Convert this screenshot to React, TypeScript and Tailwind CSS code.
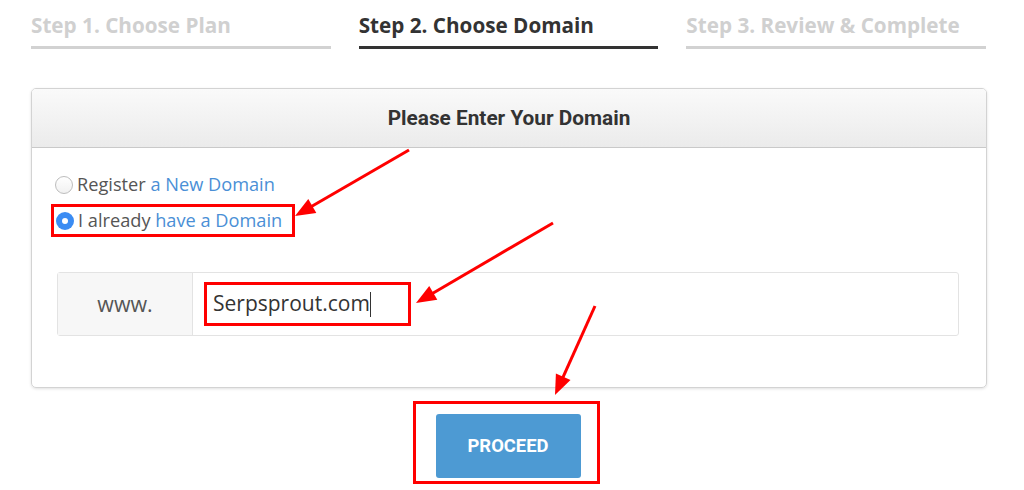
import React from "react";

type Arrow = { x1: number; y1: number; x2: number; y2: number };

const arrows: Arrow[] = [
  { x1: 409, y1: 150, x2: 295, y2: 216 },
  { x1: 553, y1: 223, x2: 416, y2: 303 },
  { x1: 595, y1: 306, x2: 555, y2: 395 },
];

function ArrowShape({ a }: { a: Arrow }) {
  const dx = a.x2 - a.x1;
  const dy = a.y2 - a.y1;
  const len = Math.hypot(dx, dy);
  const ux = dx / len;
  const uy = dy / len;
  const headLen = 20;
  const headW = 8;
  const bx = a.x2 - ux * headLen;
  const by = a.y2 - uy * headLen;
  const px = -uy;
  const py = ux;
  const pts = `${a.x2},${a.y2} ${bx + px * headW},${by + py * headW} ${bx - px * headW},${by - py * headW}`;
  return (
    <g>
      <line x1={a.x1} y1={a.y1} x2={bx + ux * 2} y2={by + uy * 2} stroke="#ff0000" strokeWidth={3} />
      <polygon points={pts} fill="#ff0000" />
    </g>
  );
}

export default function App() {
  return (
    <div
      className="relative w-[1024px] h-[490px] bg-white overflow-hidden"
      style={{ fontFamily: '"Open Sans", "Liberation Sans", sans-serif' }}
    >
      {/* Steps */}
      <div className="ml-[31px] w-[955px] grid grid-cols-3 gap-[28px] pt-[11px]">
        <div className="border-b-[3px] border-[#d2d2d2] pb-[7px]">
          <span className="text-[20.7px] leading-[28px] font-bold text-[#d0d0d0]">Step 1. Choose Plan</span>
        </div>
        <div className="border-b-[3px] border-[#333333] pb-[7px]">
          <span className="text-[20.7px] leading-[28px] font-bold text-[#333333]">Step 2. Choose Domain</span>
        </div>
        <div className="border-b-[3px] border-[#d2d2d2] pb-[7px]">
          <span className="text-[20.7px] leading-[28px] font-bold text-[#d0d0d0]">Step 3. Review &amp; Complete</span>
        </div>
      </div>

      {/* Card */}
      <div className="ml-[31px] mt-[39px] w-[956px] h-[300px] border border-[#d3d3d3] rounded-[5px] shadow-[0_1px_3px_rgba(0,0,0,0.12)] overflow-hidden">
        <div
          className="h-[59px] border-b border-[#c9c9c9] bg-gradient-to-b from-[#fafafa] to-[#ebebeb] flex items-center justify-center pt-[2px]"
          style={{ fontFamily: 'Roboto, "Liberation Sans", sans-serif' }}
        >
          <span className="text-[20.8px] font-bold text-[#333333]">Please Enter Your Domain</span>
        </div>
        <div className="px-[25px] pt-[26px]">
          <div className="flex items-center h-[22px] ml-[-2px]">
            <span className="w-[18px] h-[18px] rounded-full border border-[#bdbdbd] bg-gradient-to-b from-white to-[#f1f1f1]" />
            <span className="ml-[4px] text-[18.2px] text-[#555555]">
              Register <span className="text-[#4a8fd6]">a New Domain</span>
            </span>
          </div>
          <div className="mt-[8px] ml-[-6px] inline-flex items-center border-[3px] border-[#ff0000] pl-[2px] pr-[10px] h-[33px]">
            <span className="w-[18px] h-[18px] rounded-full bg-[#3b8cf3] flex items-center justify-center">
              <span className="w-[6px] h-[6px] rounded-full bg-white" />
            </span>
            <span className="ml-[4px] text-[18.2px] text-[#555555]">
              I already <span className="text-[#4a8fd6]">have a Domain</span>
            </span>
          </div>
          <div className="mt-[35px] flex h-[64px] border border-[#e3e3e3] rounded-[3px] mr-[2px]">
            <div className="w-[135px] bg-[#f7f7f7] border-r border-[#e3e3e3] flex items-center justify-center text-[21.4px] text-[#555555]">
              www.
            </div>
            <div className="flex-1 flex items-center pl-[11px]">
              <div className="border-[3px] border-[#ff0000] h-[44px] w-[207px] flex items-center pl-[6px]">
                <span className="text-[21px] text-[#333333]">Serpsprout.com</span>
                <span className="w-px h-[25px] bg-[#333333]" />
              </div>
            </div>
          </div>
        </div>
      </div>

      {/* Proceed */}
      <div className="flex justify-center mt-[13px] mr-[12px]">
        <div className="border-[3px] border-[#ff0000] pl-[20px] pr-[16px] pt-[10px] pb-[3px]">
          <button
            className="w-[145px] h-[64px] rounded-[3px] bg-[#4d9ad3] text-white text-[18.4px] font-bold"
            style={{ fontFamily: 'Roboto, "Liberation Sans", sans-serif' }}
          >
            PROCEED
          </button>
        </div>
      </div>

      {/* Annotation arrows */}
      <svg className="absolute left-0 top-0 pointer-events-none" width={1024} height={490}>
        {arrows.map((a, i) => (
          <ArrowShape key={i} a={a} />
        ))}
      </svg>
    </div>
  );
}
